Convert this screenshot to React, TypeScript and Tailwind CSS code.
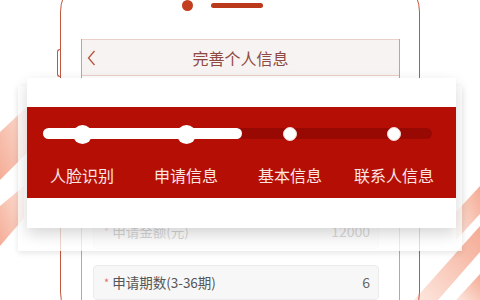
import React from 'react';

const steps = [
  { label: '人脸识别', done: true },
  { label: '申请信息', done: true },
  { label: '基本信息', done: false },
  { label: '联系人信息', done: false },
];

function Stripes() {
  return (
    <svg className="absolute inset-0" width="480" height="300" viewBox="0 0 480 300">
      <defs>
        <linearGradient id="sl" x1="0" y1="1" x2="1" y2="0">
          <stop offset="0" stopColor="#f4ad97" />
          <stop offset="1" stopColor="#fde3d9" />
        </linearGradient>
        <linearGradient id="sr" x1="0" y1="1" x2="1" y2="0">
          <stop offset="0" stopColor="#fde8e0" />
          <stop offset="1" stopColor="#f4aa93" />
        </linearGradient>
      </defs>
      <polygon points="0,132 30,104 30,150 0,180" fill="url(#sl)" />
      <polygon points="0,206 24,186 24,218 0,246" fill="url(#sl)" />
      <polygon points="456,212 480,186 480,214 456,240" fill="url(#sr)" />
      <polygon points="414,300 480,226 480,252 438,300" fill="url(#sr)" />
      <polygon points="456,300 480,274 480,300" fill="url(#sr)" />
    </svg>
  );
}

export default function App() {
  return (
    <div className="relative w-[480px] h-[300px] overflow-hidden bg-white font-['Noto_Sans_CJK_SC',sans-serif]">
      <Stripes />

      {/* phone */}
      <div className="relative ml-[60px] -mt-[28px] w-[360px] h-[360px] rounded-[40px] border-[1.5px] border-[#c0583e] flex flex-col items-start">
        <div className="ml-[121px] mt-[27px] h-[11px] flex items-center gap-[18px]">
          <div className="w-[11px] h-[11px] rounded-full bg-[#c23e1e]" />
          <div className="w-[52px] h-[5px] rounded-full bg-[#b9391a]" />
        </div>
        <div className="ml-[20px] mt-[28px] w-[319px] flex-1 border-x border-[#d59c8c] flex flex-col">
          <div className="h-[37px] border-y border-[#ebcfc8] bg-[#f7f3f2] flex items-center relative">
            <svg className="absolute left-[5px]" width="9" height="16" viewBox="0 0 9 16">
              <path d="M7.5 1 L1.5 8 L7.5 15" fill="none" stroke="#b5553f" strokeWidth="1.3" />
            </svg>
            <div className="w-full text-center text-[16px] text-[#8e4a40]">完善个人信息</div>
          </div>
          <div className="mt-[138px] ml-[11px] mr-[20px] flex flex-col gap-[16px]">
            <div className="h-[35px] rounded-[4px] border border-[#ececec] bg-[#f7f7f7] flex items-center pl-[10px] pr-[8px] text-[13.5px]">
              <span className="text-[#e36b6b] text-[11px] mr-[3px]">*</span>
              <span className="text-[#555]">申请金额(元)</span>
              <span className="ml-auto text-[#666] text-[14px]">12000</span>
            </div>
            <div className="h-[35px] rounded-[4px] border border-[#ececec] bg-[#f7f7f7] flex items-center pl-[10px] pr-[8px] text-[13.5px]">
              <span className="text-[#e36b6b] text-[11px] mr-[3px]">*</span>
              <span className="text-[#555]">申请期数(3-36期)</span>
              <span className="ml-auto text-[#666] text-[14px]">6</span>
            </div>
          </div>
        </div>
        {/* side button */}
        <div className="absolute left-[-4px] top-[76px] w-[4px] h-[28px] border-l-[1.5px] border-y-[1.5px] border-[#c0583e] rounded-l-[3px]" />
      </div>

      {/* haze layer behind card */}
      <div className="absolute left-[18px] top-[86px] w-[444px] h-[165px] bg-white/75 shadow-[0_2px_6px_rgba(0,0,0,0.1)]" />

      {/* step card */}
      <div className="absolute left-[27px] top-[78px] w-[429px] h-[150px] bg-white shadow-[0_6px_14px_rgba(0,0,0,0.16)] flex flex-col">
        <div className="h-[29px]" />
        <div className="h-[91px] bg-[#b50f05] pt-[16px]">
          <div className="relative h-[22px]">
            <div className="absolute left-[16px] right-[24px] top-[5px] h-[11px] rounded-full bg-[#990904]">
              <div className="h-full w-[199px] rounded-full bg-white" />
            </div>
            <div className="relative grid grid-cols-[repeat(4,104px)] pl-[3px] h-full">
              {steps.map((s) => (
                <div key={s.label} className="flex items-center justify-center">
                  {s.done ? (
                    <div className="w-[19px] h-[19px] rounded-full bg-white" />
                  ) : (
                    <div className="w-[14px] h-[14px] rounded-full bg-white border border-[#f3d6d2]" />
                  )}
                </div>
              ))}
            </div>
          </div>
          <div className="mt-[19px] grid grid-cols-[repeat(4,104px)] pl-[3px]">
            {steps.map((s) => (
              <div key={s.label} className="text-center text-[16px] leading-[22px] text-[#fce6e2] whitespace-nowrap">
                {s.label}
              </div>
            ))}
          </div>
        </div>
      </div>
    </div>
  );
}
